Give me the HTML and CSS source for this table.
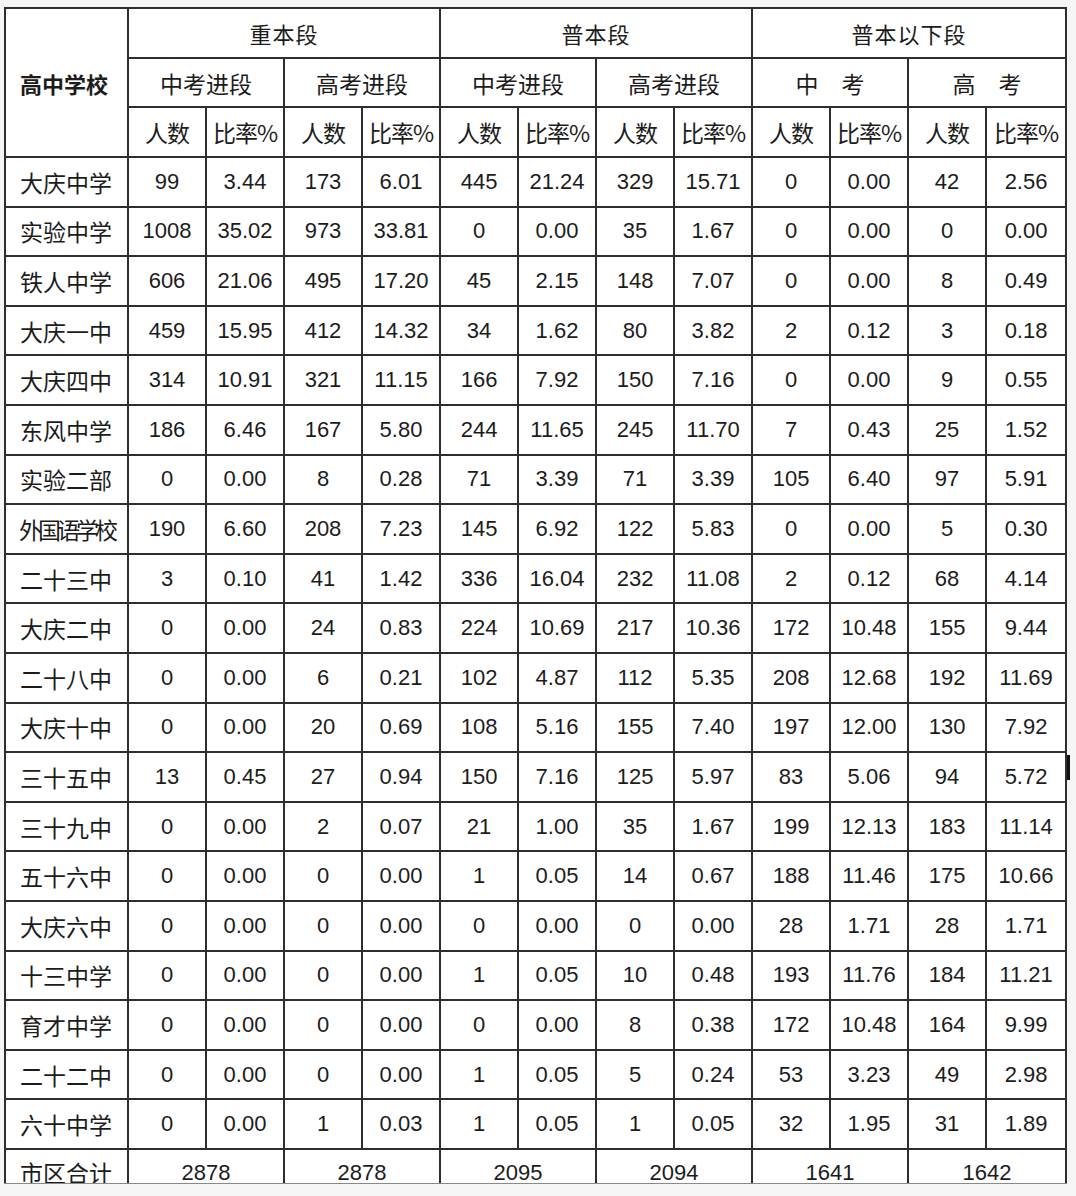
FILE: index.html
```html
<!DOCTYPE html>
<html lang="zh-CN">
<head>
<meta charset="utf-8">
<title>高中学校 分段统计</title>
<link rel="stylesheet" href="styles.css">
</head>
<body>
<div class="topbox"></div>
<div class="edge-mark"></div>
<div class="sheet">
<table class="grid">
<colgroup>
<col class="c-name">
<col class="c-num"><col class="c-num"><col class="c-num"><col class="c-num">
<col class="c-num"><col class="c-num"><col class="c-num"><col class="c-num">
<col class="c-num"><col class="c-num"><col class="c-num"><col class="c-last">
</colgroup>
<thead>
<tr class="hrow">
<th rowspan="3" class="corner">高中学校</th>
<th colspan="4">重本段</th>
<th colspan="4">普本段</th>
<th colspan="4">普本以下段</th>
</tr>
<tr class="hrow">
<th colspan="2" class="wide">中考进段</th>
<th colspan="2" class="wide">高考进段</th>
<th colspan="2" class="wide">中考进段</th>
<th colspan="2" class="wide">高考进段</th>
<th colspan="2" class="wide">中<span class="gap"></span>考</th>
<th colspan="2" class="wide">高<span class="gap"></span>考</th>
</tr>
<tr class="hrow">
<th class="sub">人数</th><th class="sub">比率%</th>
<th class="sub">人数</th><th class="sub">比率%</th>
<th class="sub">人数</th><th class="sub">比率%</th>
<th class="sub">人数</th><th class="sub">比率%</th>
<th class="sub">人数</th><th class="sub">比率%</th>
<th class="sub">人数</th><th class="sub">比率%</th>
</tr>
</thead>
<tbody>
<tr><td class="name">大庆中学</td><td>99</td><td>3.44</td><td>173</td><td>6.01</td><td>445</td><td>21.24</td><td>329</td><td>15.71</td><td>0</td><td>0.00</td><td>42</td><td>2.56</td></tr>
<tr><td class="name">实验中学</td><td>1008</td><td>35.02</td><td>973</td><td>33.81</td><td>0</td><td>0.00</td><td>35</td><td>1.67</td><td>0</td><td>0.00</td><td>0</td><td>0.00</td></tr>
<tr><td class="name">铁人中学</td><td>606</td><td>21.06</td><td>495</td><td>17.20</td><td>45</td><td>2.15</td><td>148</td><td>7.07</td><td>0</td><td>0.00</td><td>8</td><td>0.49</td></tr>
<tr><td class="name">大庆一中</td><td>459</td><td>15.95</td><td>412</td><td>14.32</td><td>34</td><td>1.62</td><td>80</td><td>3.82</td><td>2</td><td>0.12</td><td>3</td><td>0.18</td></tr>
<tr><td class="name">大庆四中</td><td>314</td><td>10.91</td><td>321</td><td>11.15</td><td>166</td><td>7.92</td><td>150</td><td>7.16</td><td>0</td><td>0.00</td><td>9</td><td>0.55</td></tr>
<tr><td class="name">东风中学</td><td>186</td><td>6.46</td><td>167</td><td>5.80</td><td>244</td><td>11.65</td><td>245</td><td>11.70</td><td>7</td><td>0.43</td><td>25</td><td>1.52</td></tr>
<tr><td class="name">实验二部</td><td>0</td><td>0.00</td><td>8</td><td>0.28</td><td>71</td><td>3.39</td><td>71</td><td>3.39</td><td>105</td><td>6.40</td><td>97</td><td>5.91</td></tr>
<tr><td class="name tight">外国语学校</td><td>190</td><td>6.60</td><td>208</td><td>7.23</td><td>145</td><td>6.92</td><td>122</td><td>5.83</td><td>0</td><td>0.00</td><td>5</td><td>0.30</td></tr>
<tr><td class="name">二十三中</td><td>3</td><td>0.10</td><td>41</td><td>1.42</td><td>336</td><td>16.04</td><td>232</td><td>11.08</td><td>2</td><td>0.12</td><td>68</td><td>4.14</td></tr>
<tr><td class="name">大庆二中</td><td>0</td><td>0.00</td><td>24</td><td>0.83</td><td>224</td><td>10.69</td><td>217</td><td>10.36</td><td>172</td><td>10.48</td><td>155</td><td>9.44</td></tr>
<tr><td class="name">二十八中</td><td>0</td><td>0.00</td><td>6</td><td>0.21</td><td>102</td><td>4.87</td><td>112</td><td>5.35</td><td>208</td><td>12.68</td><td>192</td><td>11.69</td></tr>
<tr><td class="name">大庆十中</td><td>0</td><td>0.00</td><td>20</td><td>0.69</td><td>108</td><td>5.16</td><td>155</td><td>7.40</td><td>197</td><td>12.00</td><td>130</td><td>7.92</td></tr>
<tr><td class="name">三十五中</td><td>13</td><td>0.45</td><td>27</td><td>0.94</td><td>150</td><td>7.16</td><td>125</td><td>5.97</td><td>83</td><td>5.06</td><td>94</td><td>5.72</td></tr>
<tr><td class="name">三十九中</td><td>0</td><td>0.00</td><td>2</td><td>0.07</td><td>21</td><td>1.00</td><td>35</td><td>1.67</td><td>199</td><td>12.13</td><td>183</td><td>11.14</td></tr>
<tr><td class="name">五十六中</td><td>0</td><td>0.00</td><td>0</td><td>0.00</td><td>1</td><td>0.05</td><td>14</td><td>0.67</td><td>188</td><td>11.46</td><td>175</td><td>10.66</td></tr>
<tr><td class="name">大庆六中</td><td>0</td><td>0.00</td><td>0</td><td>0.00</td><td>0</td><td>0.00</td><td>0</td><td>0.00</td><td>28</td><td>1.71</td><td>28</td><td>1.71</td></tr>
<tr><td class="name">十三中学</td><td>0</td><td>0.00</td><td>0</td><td>0.00</td><td>1</td><td>0.05</td><td>10</td><td>0.48</td><td>193</td><td>11.76</td><td>184</td><td>11.21</td></tr>
<tr><td class="name">育才中学</td><td>0</td><td>0.00</td><td>0</td><td>0.00</td><td>0</td><td>0.00</td><td>8</td><td>0.38</td><td>172</td><td>10.48</td><td>164</td><td>9.99</td></tr>
<tr><td class="name">二十二中</td><td>0</td><td>0.00</td><td>0</td><td>0.00</td><td>1</td><td>0.05</td><td>5</td><td>0.24</td><td>53</td><td>3.23</td><td>49</td><td>2.98</td></tr>
<tr><td class="name">六十中学</td><td>0</td><td>0.00</td><td>1</td><td>0.03</td><td>1</td><td>0.05</td><td>1</td><td>0.05</td><td>32</td><td>1.95</td><td>31</td><td>1.89</td></tr>
<tr class="total"><td class="name">市区合计</td><td colspan="2">2878</td><td colspan="2">2878</td><td colspan="2">2095</td><td colspan="2">2094</td><td colspan="2">1641</td><td colspan="2">1642</td></tr>
</tbody>
</table>
</div>
</body>
</html>
```

FILE: styles.css
```css
html, body {
  background: #f6f6f6;
}
body {
  margin: 7px 0 0 4px;
  position: relative;
  font-family: "Liberation Sans", "Noto Sans CJK SC", sans-serif;
  color: #1c1c1c;
}
.topbox {
  position: absolute;
  top: -7px;
  left: 737px;
  width: 335px;
  height: 3px;
  border: 1px solid #dcdcdc;
  border-top: none;
  background: #fff;
}
.edge-mark {
  position: absolute;
  top: 748px;
  left: 1063px;
  width: 3px;
  height: 25px;
  background: #111;
}
.sheet {
  width: 1063px;
  height: 1176px;
  overflow: hidden;
  border-bottom: 1px solid #8a8a8a;
  background: #fff;
}
.grid {
  border-collapse: collapse;
  table-layout: fixed;
  width: 1062px;
  background: #fff;
}
.c-name { width: 123px; }
.c-num { width: 78px; }
.c-last { width: 80px; }
.grid th, .grid td {
  border: 2px solid #2e2e2e;
  padding: 0;
  text-align: center;
  vertical-align: middle;
  white-space: nowrap;
  overflow: hidden;
}
.hrow { height: 49.7px; }
.grid tbody tr { height: 49.6px; }
.grid th {
  font-family: "Noto Sans CJK SC", sans-serif;
  font-weight: 400;
  font-size: 22px;
  letter-spacing: 1px;
}
.grid th.wide { font-size: 23px; letter-spacing: 0; }
.grid th.sub { font-size: 23px; letter-spacing: -1px; }
.grid th.corner {
  font-weight: 700;
  font-size: 22px;
  text-align: left;
  padding-left: 14px;
  letter-spacing: 0;
}
.gap { display: inline-block; width: 23px; }
.grid td {
  font-size: 22px;
  font-weight: 400;
}
.grid td.name {
  font-family: "Noto Sans CJK SC", sans-serif;
  font-size: 23px;
  text-align: left;
  padding-left: 14px;
}
.grid td.tight {
  padding-left: 13px;
  letter-spacing: -4px;
}
.total td {
  vertical-align: top;
  padding-top: 10px;
}
.total td.name {
  padding-top: 5px;
}
```
